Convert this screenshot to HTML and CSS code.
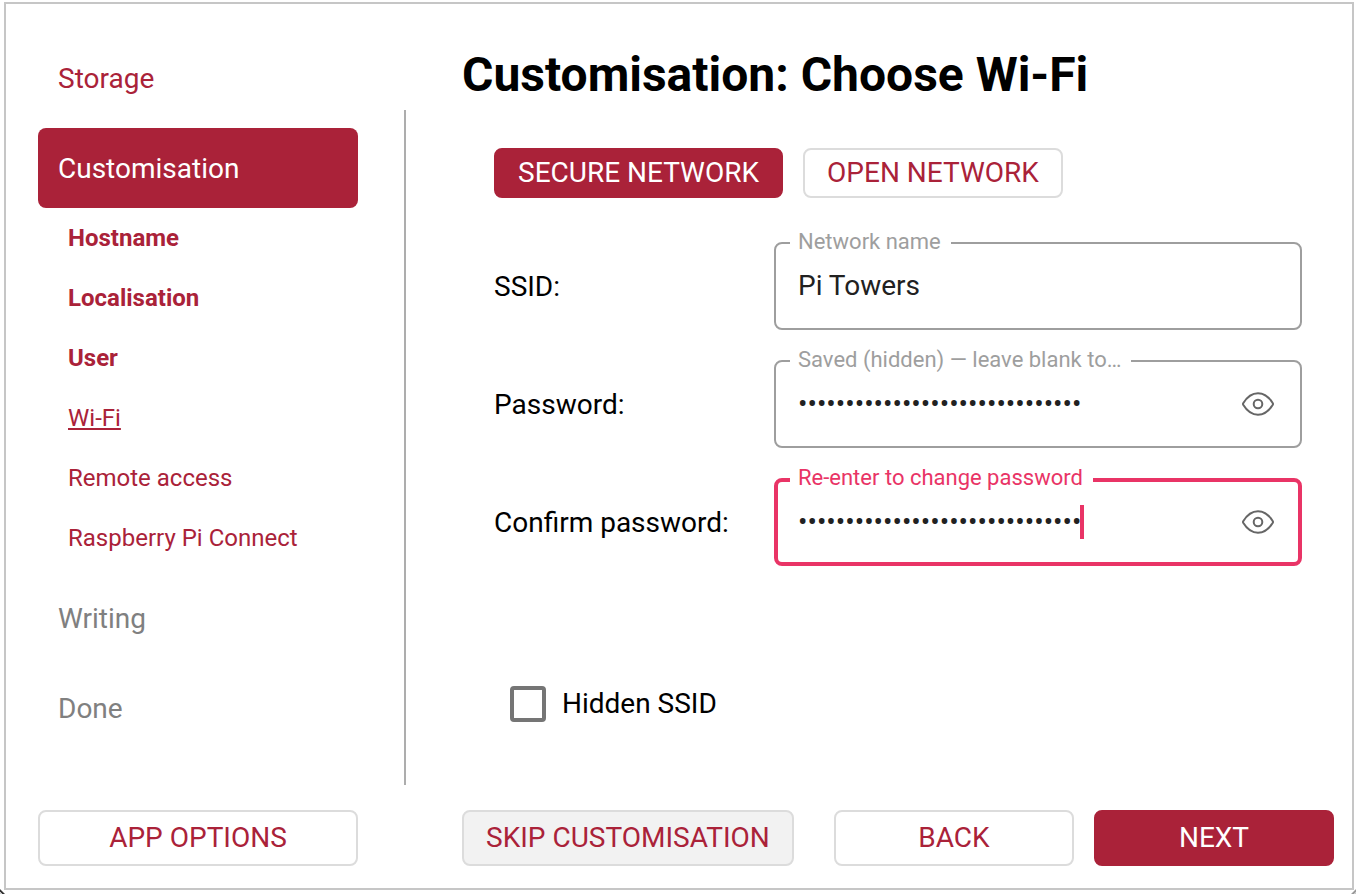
FILE: index.html
```html
<!DOCTYPE html>
<html lang="en">
  <head>
    <meta charset="UTF-8">
    <meta name="viewport" content="width=device-width, initial-scale=1.0">
    <title>Customisation: Choose Wi-Fi</title>
    <link rel="stylesheet" href="styles.css">
  </head>
  <body>
    <div class="window">
      <aside class="sidebar">
        <nav class="steps">
          <a class="step" href="#storage">Storage</a>
          <a class="step active" href="#customisation">Customisation</a>
          <div class="substeps">
            <a class="substep done" href="#hostname">Hostname</a>
            <a class="substep done" href="#localisation">Localisation</a>
            <a class="substep done" href="#user">User</a>
            <a class="substep current" href="#wifi">Wi-Fi</a>
            <a class="substep" href="#remote">Remote access</a>
            <a class="substep" href="#connect">Raspberry Pi Connect</a>
          </div>
          <a class="step disabled" href="#writing">Writing</a>
          <a class="step disabled" href="#done">Done</a>
        </nav>
        <button class="button" type="button">APP OPTIONS</button>
      </aside>

      <div class="divider"></div>

      <main class="content">
        <h1>Customisation: Choose Wi-Fi</h1>

        <form class="wifi-form" id="wifi-form">
          <div class="network-type">
            <button class="button small primary" type="button">SECURE NETWORK</button>
            <button class="button small" type="button">OPEN NETWORK</button>
          </div>

          <div class="row">
            <label for="ssid">SSID:</label>
            <div class="field">
              <label class="hint" for="ssid">Network name</label>
              <input type="text" id="ssid" value="Pi Towers">
            </div>
          </div>

          <div class="row">
            <label for="password">Password:</label>
            <div class="field">
              <label class="hint" for="password">Saved (hidden) — leave blank to…</label>
              <input type="password" id="password" value="012345678901234567890123456789">
              <button class="reveal" type="button" aria-label="Show password">
                <svg viewBox="0 0 32 24" width="32" height="24">
                  <path d="M1.2 11.2C5 5 10 1.2 16 1.2S27 5 30.8 11.2Q31.2 12 30.8 12.8C27 19 22 22.8 16 22.8S5 19 1.2 12.8Q.8 12 1.2 11.2Z"/>
                  <circle cx="16" cy="12" r="4.3"/>
                </svg>
              </button>
            </div>
          </div>

          <div class="row">
            <label for="confirm">Confirm password:</label>
            <div class="field focused">
              <label class="hint" for="confirm">Re-enter to change password</label>
              <input type="password" id="confirm" value="012345678901234567890123456789">
              <span class="caret"></span>
              <button class="reveal" type="button" aria-label="Show password">
                <svg viewBox="0 0 32 24" width="32" height="24">
                  <path d="M1.2 11.2C5 5 10 1.2 16 1.2S27 5 30.8 11.2Q31.2 12 30.8 12.8C27 19 22 22.8 16 22.8S5 19 1.2 12.8Q.8 12 1.2 11.2Z"/>
                  <circle cx="16" cy="12" r="4.3"/>
                </svg>
              </button>
            </div>
          </div>

          <div class="check">
            <input type="checkbox" id="hidden-ssid">
            <label for="hidden-ssid">Hidden SSID</label>
          </div>
        </form>

        <div class="actions">
          <button class="button skip" type="button">SKIP CUSTOMISATION</button>
          <button class="button wide back" type="button">BACK</button>
          <button class="button wide primary" type="submit" form="wifi-form">NEXT</button>
        </div>
      </main>
    </div>
  </body>
</html>
```

FILE: styles.css
```css
* {
  box-sizing: border-box;
}
body {
  display: flex;
  min-height: 100vh;
  margin: 0;
  padding: 2px 2px 4px 4px;
  font-family: Roboto, sans-serif;
  font-size: 28px;
  line-height: 36px;
  color: #000;
  background:
    linear-gradient(45deg, #ccc 0 2px, #333 2px 3px, transparent 4px) left bottom / 6px 6px no-repeat,
    linear-gradient(-45deg, #ccc 0 2px, #999 2px 3px, transparent 4px) right bottom / 6px 6px no-repeat,
    #fff;
}
a {
  color: #aa2239;
  text-decoration: none;
}
input,
button {
  font: inherit;
}
.window {
  display: flex;
  flex: 1;
  padding: 34px 18px 22px 32px;
  border: 2px solid #c6c6c6;
  background-color: #fff;
}

/* Sidebar */
.sidebar {
  display: flex;
  flex-direction: column;
  justify-content: space-between;
  width: 320px;
}
.steps {
  display: flex;
  flex-direction: column;
}
.step {
  display: flex;
  align-items: center;
  height: 80px;
  margin-bottom: 10px;
  padding: 2px 20px 0;
  border-radius: 8px;
}
.step.active {
  margin-bottom: 0;
  color: #fff;
  background-color: #aa2239;
}
.step.disabled {
  color: #808080;
}
.substeps {
  display: flex;
  flex-direction: column;
  margin-bottom: 10px;
  padding: 0 30px;
  font-size: 24px;
}
.substep {
  line-height: 60px;
}
.substep.done {
  font-weight: bold;
}
.substep.current {
  text-decoration: underline;
}
.divider {
  width: 2px;
  margin: 72px 56px 81px 46px;
  background-color: #adadad;
}

/* Buttons */
.button {
  height: 56px;
  padding: 0 22px;
  border: 2px solid #dcdcdc;
  border-radius: 8px;
  color: #aa2239;
  background-color: #fff;
  cursor: pointer;
}
.button.small {
  height: 50px;
}
.button.wide {
  width: 240px;
}
.button.skip {
  background-color: #f2f2f2;
}
.button.primary {
  border-color: #aa2239;
  color: #fff;
  background-color: #aa2239;
}

/* Content */
.content {
  display: flex;
  flex: 1;
  flex-direction: column;
}
h1 {
  margin: 0;
  font-size: 48px;
  line-height: 74px;
}
.wifi-form {
  display: flex;
  flex-direction: column;
  gap: 30px;
  padding: 36px 32px 0;
}
.network-type {
  display: flex;
  gap: 20px;
  margin-bottom: 14px;
}
.row {
  display: grid;
  grid-template-columns: 280px 1fr;
  align-items: center;
}
.row > label {
  padding-top: 2px;
}
.field {
  position: relative;
  display: flex;
  align-items: center;
  height: 88px;
  padding: 0 22px;
  border: 2px solid #9e9e9e;
  border-radius: 8px;
}
.field input {
  flex: 1;
  min-width: 0;
  padding: 0;
  border: none;
  outline: none;
  color: #212121;
  background: none;
}
.field.focused {
  padding: 0 20px;
  border: 4px solid #e93466;
}
.hint {
  position: absolute;
  top: -16px;
  left: 14px;
  padding: 0 10px 0 8px;
  font-size: 22px;
  line-height: 28px;
  color: #9e9e9e;
  background-color: #fff;
}
.focused .hint {
  top: -18px;
  left: 12px;
  color: #e93466;
}
.caret {
  position: absolute;
  top: 23px;
  left: 302px;
  width: 4px;
  height: 34px;
  background-color: #e93466;
}
.reveal {
  display: flex;
  margin-right: 4px;
  padding: 0;
  border: none;
  background: none;
  cursor: pointer;
}
.reveal svg {
  fill: none;
  stroke: #666;
  stroke-width: 2;
}
.check {
  display: flex;
  align-items: center;
  gap: 16px;
  margin-top: 90px;
  padding-left: 16px;
}
.check input {
  width: 36px;
  height: 36px;
  margin: 0;
  border: 4px solid #757575;
  border-radius: 4px;
  appearance: none;
}
.check input:checked {
  background-color: #aa2239;
}
.actions {
  display: flex;
  gap: 20px;
  margin-top: auto;
}
.back {
  margin-left: auto;
}
```
